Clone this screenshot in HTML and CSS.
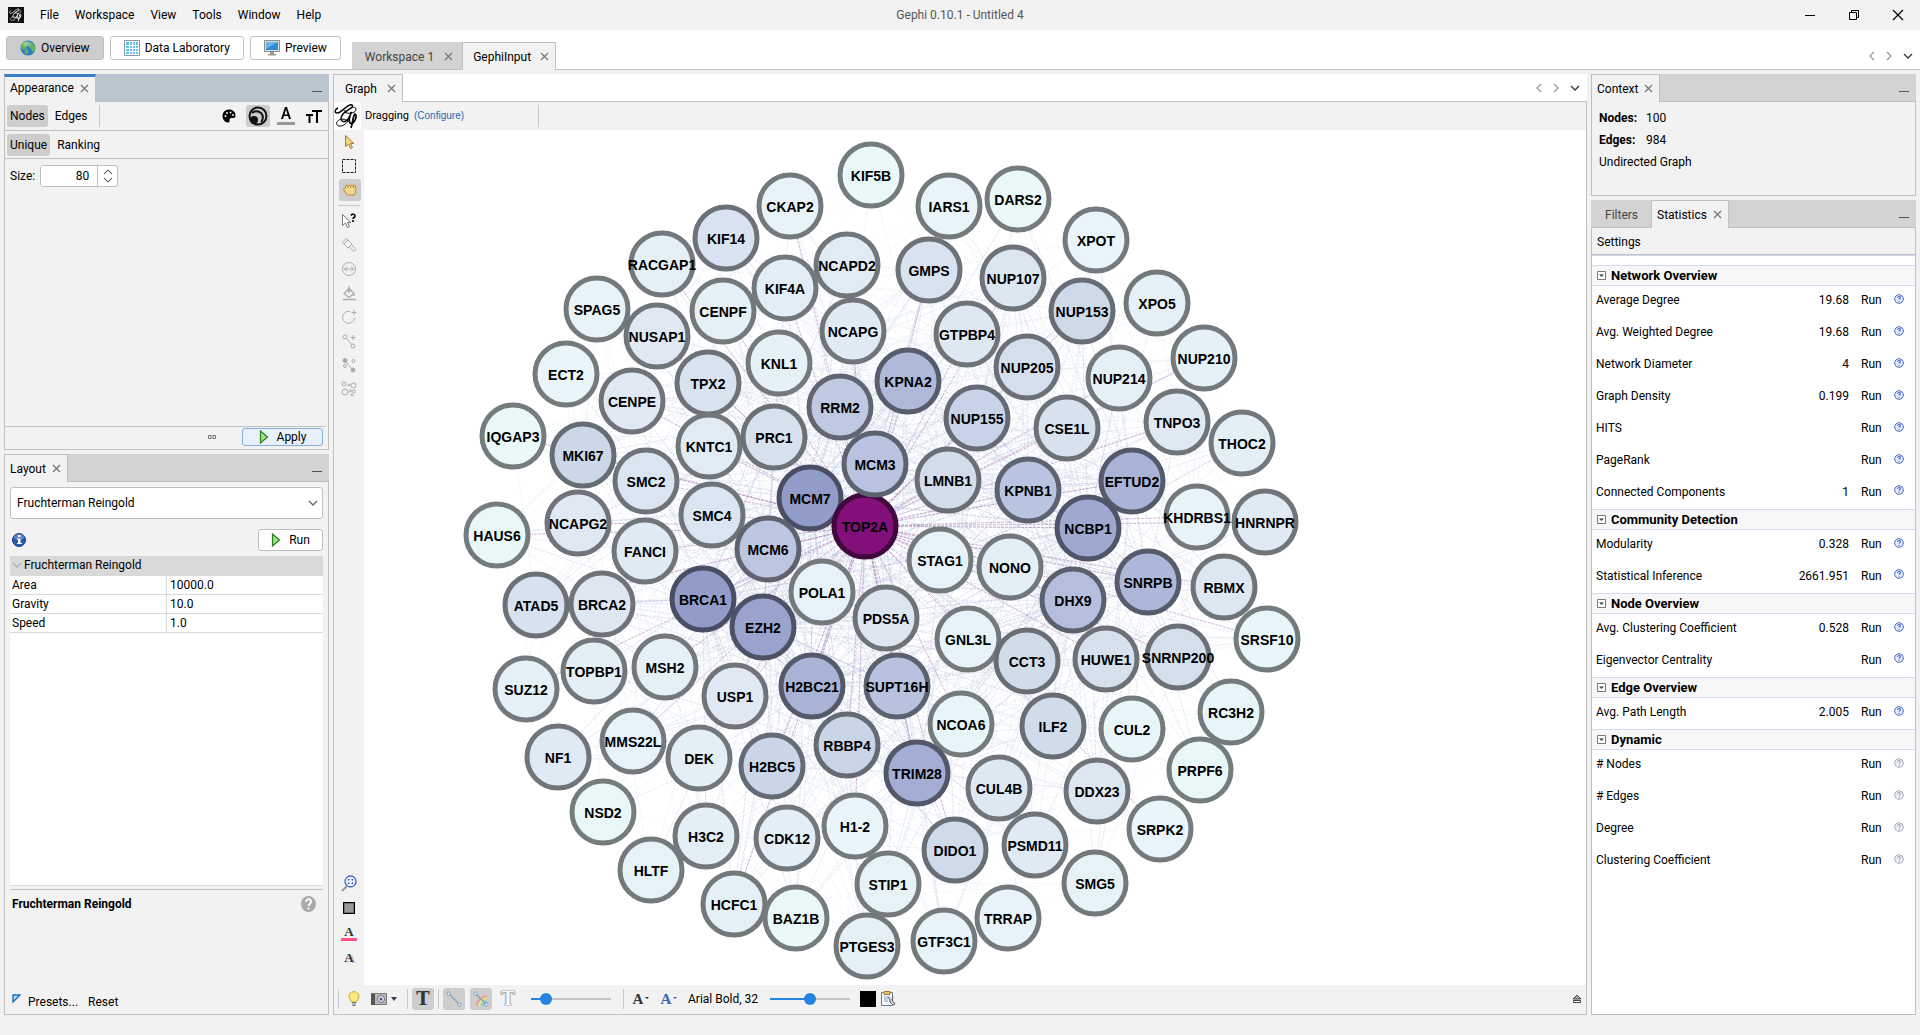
FILE: index.html
```html
<!DOCTYPE html>
<html lang="en">
<head>
<meta charset="utf-8">
<title>Gephi 0.10.1 - Untitled 4</title>
<link rel="stylesheet" href="styles.css">
</head>
<body>
<svg class="sprite" aria-hidden="true">
  <symbol id="x" viewBox="0 0 9 9"><path d="M1 1l7 7M8 1l-7 7" stroke="currentColor" stroke-width="1.3" fill="none"/></symbol>
  <symbol id="left" viewBox="0 0 10 10"><path d="M7 1L3 5l4 4" stroke="currentColor" stroke-width="1.3" fill="none"/></symbol>
  <symbol id="right" viewBox="0 0 10 10"><path d="M3 1l4 4-4 4" stroke="currentColor" stroke-width="1.3" fill="none"/></symbol>
  <symbol id="down" viewBox="0 0 10 10"><path d="M1 3l4 4 4-4" stroke="currentColor" stroke-width="1.3" fill="none"/></symbol>
  <symbol id="play" viewBox="0 0 10 14"><path d="M1.5 1v12L8.500 7z" fill="#a9dc86" stroke="#23801c" stroke-width="1.2"/></symbol>
  <symbol id="fold" viewBox="0 0 9 9"><path d="M.5.5h8v8h-8z" fill="#fff" stroke="#777"/><path d="M2 3.500h5L4.500 6z" fill="#444"/></symbol>
  <symbol id="help" viewBox="0 0 10 10"><circle cx="5" cy="5" r="4.300" fill="#eaf0ff" stroke="currentColor"/><path d="M3.600 3.900c0-2 2.900-1.800 2.800-.2 0 1-1.300 1-1.300 2M5.100 6.700v1" stroke="currentColor" stroke-width="1.1" fill="none"/></symbol>
  <symbol id="edge" viewBox="0 0 16 16"><path d="M3 3l10 10" stroke="#7fa3cc" stroke-width="1.2"/><circle cx="2.500" cy="2.500" r="1.500" fill="#fff" stroke="#6f95c4"/><circle cx="13.500" cy="13.500" r="1.500" fill="#fff" stroke="#6f95c4"/></symbol>
  <symbol id="gephi" viewBox="0 0 26 26"><g fill="none" stroke="currentColor"><path stroke-width="1.400" d="M4 5C1 6 0 10 3 10c5 0 11-10 15-8 3 2-6 5-9 9-5 7 1 10 5 5 2-3 3-6 4-7"/><path stroke-width="1" d="M11 10c4-4 10-8 11-4 1 5-13 6-11 1M17 9c-1 8-6 15-12 14-4-1-3-6 3-7 4 0 6 3 8 2"/><path stroke-width="1.700" d="M16 13c-2 5 0 9 3 7 3-3 4-8 2-9-2 1-2 8-4 14"/></g></symbol>
</svg>

<header class="titlebar">
  <nav class="menu">
    <span class="app-icon"><svg width="14" height="14" viewBox="0 0 26 26"><use href="#gephi"/></svg></span>
    <button>File</button><button>Workspace</button><button>View</button><button>Tools</button><button>Window</button><button>Help</button>
  </nav>
  <h1>Gephi 0.10.1 - Untitled 4</h1>
  <div class="window-buttons">
    <button aria-label="Minimize"><svg width="12" height="12"><path d="M1 6.500h10" stroke="#000"/></svg></button>
    <button aria-label="Restore"><svg width="12" height="12" fill="none" stroke="#000"><path d="M1.500 3.500h7v7h-7zM3.500 3.500v-2h7v7h-2"/></svg></button>
    <button aria-label="Close"><svg width="12" height="12"><path d="M1 1l10 10M11 1L1 11" stroke="#000" stroke-width="1.200"/></svg></button>
  </div>
</header>

<div class="perspectives">
  <button class="perspective active"><svg width="16" height="16"><circle cx="8" cy="8" r="7.500" fill="#2d7fc4"/><path d="M2 4c3-4 7-3 7-1S6 6 6 8s-3 2-5 0zM10 3c3-1 5 3 5 5s-1 4-2 4-1-3-3-4 0-3 0-5zM6 9c3 0 3 3 1 5-2 0-3-3-1-5z" fill="#64b553"/><ellipse cx="7" cy="4" rx="4" ry="2.500" fill="#fff" opacity=".3"/></svg>Overview</button>
  <button class="perspective"><svg width="16" height="16"><path d="M.5.5h15v15H.5z" fill="#fff" stroke="#8b9aa3"/><path d="M2 2h12v12H2z" fill="#62c4ec"/><path d="M2 5.500h12M2 8.500h12M2 11.500h12M5.500 2v12M8.500 2v12M11.500 2v12" stroke="#fff"/></svg>Data Laboratory</button>
  <button class="perspective"><svg width="16" height="16"><path d="M.5.5h15v11H.5z" fill="#ddd" stroke="#8c8c8c"/><path d="M2 2h12v8H2z" fill="#2f8bd2"/><path d="M2 2h12L2 9z" fill="#6bb4ea"/><path d="M6 12h4v2H6zM4 14h8v1.500H4z" fill="#999"/></svg>Preview</button>
  <div class="workspace-tabs">
    <div class="tab muted">Workspace 1<button aria-label="Close Workspace 1"><svg width="9" height="9"><use href="#x"/></svg></button></div>
    <div class="tab active">GephiInput<button aria-label="Close GephiInput"><svg width="9" height="9"><use href="#x"/></svg></button></div>
  </div>
  <div class="tab-nav">
    <button aria-label="Previous"><svg width="10" height="10"><use href="#left"/></svg></button>
    <button aria-label="Next"><svg width="10" height="10"><use href="#right"/></svg></button>
    <button class="dark" aria-label="List"><svg width="10" height="10"><use href="#down"/></svg></button>
  </div>
</div>

<main class="workbench">
  <div class="column left">
    <section class="panel">
      <header class="panel-head focused">
        <div class="tab active">Appearance<button aria-label="Close Appearance"><svg width="9" height="9"><use href="#x"/></svg></button></div>
        <button class="minimize" aria-label="Minimize"></button>
      </header>
      <div class="panel-body">
        <div class="strip">
          <button class="toggle on">Nodes</button><button class="toggle">Edges</button>
          <div class="strip-icons">
            <button class="tool" aria-label="Color"><svg width="14" height="14"><path d="M7 .5C3 .5.500 3.500.500 7S3 13.500 6 13.500c2 0 1.500-1.500 1.500-2.500 0-1.500 1-2 2.500-2 2 0 3.500 0 3.500-2.500C13.500 3 11 .5 7 .5z"/><g fill="#f2f2f2"><circle cx="3.500" cy="7" r="1"/><circle cx="5" cy="4" r="1"/><circle cx="8.500" cy="3.500" r="1"/><circle cx="11" cy="6" r="1"/></g></svg></button>
            <button class="tool on" aria-label="Size"><svg width="20" height="20" fill="none" stroke="#111" stroke-width="2"><circle cx="10" cy="10" r="8.500"/><path d="M4 7a6 6 0 1 1 9 9"/><circle cx="6" cy="14" r="4" fill="#111" stroke="none"/></svg></button>
            <button class="tool" aria-label="Label color"><svg width="18" height="18"><path d="M8 0h2l4 12h-2l-1-3H7l-1 3H4zM9 2.500L7.500 7.500h3z" fill-rule="evenodd"/><path d="M0 15h18v3H0z" fill="#999"/></svg></button>
            <button class="tool" aria-label="Label size"><svg width="16" height="14"><path d="M6 1h10v2h-4v11h-2V3H6zM0 5h7v2H4.500v7h-2V7H0z"/></svg></button>
          </div>
        </div>
        <div class="strip second"><button class="toggle on">Unique</button><button class="toggle">Ranking</button></div>
        <div class="size-row">
          <label for="size">Size:</label>
          <div class="spinner"><input id="size" type="text" value="80"><span class="steps"><svg width="10" height="14" fill="none" stroke="#777" stroke-width="1.200"><path d="M1 5l4-4 4 4M1 9l4 4 4-4"/></svg></span></div>
        </div>
        <div class="apply-row">
          <svg width="10" height="6" fill="none" stroke="#777"><path d="M4.500 1.500h-3v3h3M5.500 1.500h3v3h-3M3 3h4"/></svg>
          <button class="btn apply"><svg width="10" height="14"><use href="#play"/></svg>Apply</button>
        </div>
      </div>
    </section>

    <section class="panel">
      <header class="panel-head">
        <div class="tab active">Layout<button aria-label="Close Layout"><svg width="9" height="9"><use href="#x"/></svg></button></div>
        <button class="minimize" aria-label="Minimize"></button>
      </header>
      <div class="panel-body layout-body">
        <div class="select"><select aria-label="Layout algorithm"><option>Fruchterman Reingold</option></select><svg width="10" height="10"><use href="#down"/></svg></div>
        <div class="run-row">
          <svg width="14" height="14"><circle cx="7" cy="7" r="6.500" fill="#2c58b0" stroke="#1c3f8c"/><ellipse cx="7" cy="4" rx="5" ry="3" fill="#fff" opacity=".25"/><path d="M6 2h2.500v2H6zM5 5.500h3.500v4.500H10v1H5v-1h1V6.500H5z" fill="#fff"/></svg>
          <button class="btn run"><svg width="10" height="14"><use href="#play"/></svg>Run</button>
        </div>
        <div class="sheet">
          <table class="props">
            <thead><tr><th colspan="2"><svg width="10" height="10"><use href="#down"/></svg>Fruchterman Reingold</th></tr></thead>
            <tbody>
              <tr><td>Area</td><td>10000.0</td></tr>
              <tr><td>Gravity</td><td>10.0</td></tr>
              <tr><td>Speed</td><td>1.0</td></tr>
            </tbody>
          </table>
        </div>
        <div class="description"><b>Fruchterman Reingold</b><svg width="15" height="16"><ellipse cx="7.500" cy="8" rx="7.500" ry="8" fill="#aaa"/><path d="M5 6c0-4 5.500-3.500 5 0 0 2-2.500 2-2.500 4M7.500 11.500v2" stroke="#fff" stroke-width="1.800" fill="none"/></svg></div>
        <div class="presets"><svg width="9" height="9"><path d="M1 1h7L1 8z" fill="#bcd9f2" stroke="#1a6fb5" stroke-width="1.400"/></svg><button>Presets...</button><button>Reset</button></div>
      </div>
    </section>
  </div>

  <section class="panel graph">
    <header class="panel-head plain">
      <div class="tab active">Graph<button aria-label="Close Graph"><svg width="9" height="9"><use href="#x"/></svg></button></div>
      <div class="tab-nav">
        <button aria-label="Previous"><svg width="10" height="10"><use href="#left"/></svg></button>
        <button aria-label="Next"><svg width="10" height="10"><use href="#right"/></svg></button>
        <button class="dark" aria-label="List"><svg width="10" height="10"><use href="#down"/></svg></button>
      </div>
    </header>
    <div class="panel-body">
      <div class="mode-bar"><span class="logo"><svg width="26" height="26"><use href="#gephi"/></svg></span><span class="mode">Dragging</span><a href="#configure">(Configure)</a></div>
      <div class="stage">
        <div class="side-tools">
          <button class="tool" aria-label="Select"><svg width="16" height="16"><path d="M4.500 1.500v11l3-2.500 2 4.500 2-1-2-4h3.500z" fill="#f3d58a" stroke="#a87a26"/></svg></button>
          <button class="tool" aria-label="Rectangle selection"><svg width="16" height="16"><path d="M1.500 1.500h13v13h-13z" fill="none" stroke="#222" stroke-dasharray="3 1"/></svg></button>
          <button class="tool on" aria-label="Drag"><svg width="16" height="16"><path d="M2.500 9l-1-2 2-1V4l2-1 1.500 1 1.500-1.500L10 4l2-1 1.500 1 .5 4-1.500 5H5.500z" fill="#f3d78e" stroke="#b98a33"/><path d="M6 4v2M8.500 4v2M11.500 4v2" stroke="#b98a33"/></svg></button>
          <hr>
          <button class="tool" aria-label="Node details"><svg width="16" height="16"><path d="M1.500 1.500v11l3-2.500 2 4.500 2-1-2-4H10z" fill="#fff" stroke="#777"/><path d="M10 2.500c1-2 4-1.500 4 .5 0 1.500-2 1.500-2 3M12 7v2" stroke="#111" stroke-width="1.700" fill="none"/></svg></button>
          <button class="tool dim" aria-label="Brush"><svg width="16" height="16"><path d="M1.500 5.500l4-4L11 7l-4 4zM3 7l4-4M8 9.500l5 5 2-2-4.500-5"/></svg></button>
          <button class="tool dim" aria-label="Sizer"><svg width="16" height="16"><circle cx="8" cy="8" r="6.500"/><path d="M3.500 8h9M6 5.500L3.500 8 6 10.500M10 5.500L12.500 8 10 10.500"/></svg></button>
          <button class="tool dim" aria-label="Painter"><svg width="16" height="16"><path d="M2 14.500h13M3 8.500l5-5 5 5-5 4zM8 8V1M13 9v2" stroke-width="1.300"/></svg></button>
          <button class="tool dim" aria-label="Node pencil"><svg width="16" height="16"><path d="M9 2.500A6 6 0 1 0 13.500 9M13 1v5M10.500 3.500h5"/></svg></button>
          <button class="tool dim" aria-label="Edge pencil"><svg width="16" height="16"><circle cx="4" cy="4" r="2"/><circle cx="12" cy="13" r="2"/><path d="M5.500 5.500l5 6M12 2v5M9.500 4.500h5"/></svg></button>
          <button class="tool dim" aria-label="Shortest path"><svg width="16" height="16"><circle cx="4" cy="3.500" r="2" fill="#aaa"/><circle cx="12" cy="13" r="2" fill="#aaa"/><circle cx="12.500" cy="4" r="1.500"/><circle cx="4" cy="9" r="1.500"/><path d="M5 5l6 7"/></svg></button>
          <button class="tool dim" aria-label="Heat map"><svg width="16" height="16"><circle cx="3" cy="3" r="2"/><circle cx="8" cy="4" r="1"/><circle cx="12.500" cy="4.500" r="2.500"/><circle cx="4" cy="11" r="3"/><circle cx="9.500" cy="10" r="1"/><circle cx="13" cy="10.500" r="1.500"/><circle cx="11" cy="14" r="1"/></svg></button>
          <span class="push"></span>
          <button class="tool" aria-label="Center graph"><svg width="16" height="18"><path d="M6 11l-5 5" stroke="#999" stroke-width="2"/><circle cx="9.500" cy="6.500" r="5.500" fill="#eef3ff" stroke="#4064c8" stroke-width="1.300"/><path d="M7.500 5.500v-1h1M10.500 4.500h1v1M11.500 7.500v1h-1M8.500 8.500h-1v-1" stroke="#2745b0" stroke-width="1.200" fill="none"/></svg></button>
          <button class="tool" aria-label="Background"><svg width="12" height="12"><path d="M.5.500h11v11H.5z" fill="#999" stroke="#000" stroke-width="1.500"/></svg></button>
          <button class="tool serif pink" aria-label="Reset label color">A</button>
          <button class="tool serif shade" aria-label="Reset label size">A</button>
        </div>
        <svg class="canvas" viewBox="364 130 1222 855" role="img" aria-label="Graph"><g id="edges"></g><g id="nodes"></g></svg>
      </div>
      <div class="view-bar">
        <i class="sep"></i>
        <button class="tool" aria-label="Background color"><svg width="12" height="16"><path d="M6 .700c-4 0-6 4-4.500 6.500L3.500 11h5l2-3.800C12 4.700 10 .7 6 .7z" fill="#fbe97c" stroke="#c8a63a"/><path d="M4 11.500h4M4 13h4M4.500 14.500h3" stroke="#777"/></svg></button>
        <button class="tool camera" aria-label="Screenshot"><svg width="16" height="12"><path d="M.5.500h15v11H.5z" fill="#b9b9b9" stroke="#777"/><path d="M0 1h4v11H0z" fill="#555"/><circle cx="10" cy="6" r="3.500" fill="#e8eaf6" stroke="#667"/><circle cx="10" cy="6" r="1.500" fill="#44558f"/></svg><svg width="6" height="4"><path d="M0 0h6L3 4z" fill="#345"/></svg></button>
        <i class="sep"></i>
        <button class="tool on slab" aria-label="Node labels">T</button>
        <i class="sep"></i>
        <button class="tool on" aria-label="Edges"><svg width="16" height="16"><use href="#edge"/></svg></button>
        <button class="tool on" aria-label="Edge color"><svg width="16" height="16" fill="none"><path d="M4 15c0-4 3-9 10-10" stroke="#f09a9a" stroke-width="2"/><path d="M6 15c0-3 3-7 8-8" stroke="#f2e08a" stroke-width="2"/><path d="M8 15c0-2 2-5 6-6" stroke="#9fdc9f" stroke-width="2"/><path d="M10 15c0-2 2-3 4-4" stroke="#9cb4ee" stroke-width="2"/><use href="#edge"/></svg></button>
        <button class="tool slab hollow" aria-label="Edge labels">T</button>
        <input class="range first" type="range" min="0" max="100" value="13" aria-label="Edge weight scale">
        <i class="sep"></i>
        <button class="tool serif size" aria-label="Size mode">A<small></small></button>
        <button class="tool serif size blue" aria-label="Color mode">A<small></small></button>
        <button class="font">Arial Bold, 32</button>
        <input class="range second" type="range" min="0" max="100" value="50" aria-label="Label size">
        <button class="swatch" aria-label="Label color"></button>
        <button class="clip" aria-label="Attributes"><svg width="16" height="17"><path d="M1.500 2.500h11v13h-11z" fill="#f4f8ff" stroke="#667a94"/><path d="M4 1.500h6v3H4z" fill="#e9c06a" stroke="#a87a26"/><path d="M4 7h6M4 9h4M4 11h4" stroke="#8ea6c8"/><path d="M8 7l2 3v2l3 3 2-1-3-4 1-3" fill="#ddd" stroke="#555"/></svg></button>
        <button class="expand" aria-label="Expand"><svg width="10" height="10"><path d="M1 5l4-4 4 4z" fill="#aaa" stroke="#444"/><path d="M1.500 6.500h7v2h-7z" fill="#fff" stroke="#444"/></svg></button>
      </div>
    </div>
  </section>

  <div class="column right">
    <section class="panel">
      <header class="panel-head">
        <div class="tab active">Context<button aria-label="Close Context"><svg width="9" height="9"><use href="#x"/></svg></button></div>
        <button class="minimize" aria-label="Minimize"></button>
      </header>
      <div class="panel-body context">
        <p><b>Nodes:</b>100</p><p><b>Edges:</b>984</p><p>Undirected Graph</p>
      </div>
    </section>
    <section class="panel">
      <header class="panel-head">
        <div class="tab muted">Filters</div>
        <div class="tab active">Statistics<button aria-label="Close Statistics"><svg width="9" height="9"><use href="#x"/></svg></button></div>
        <button class="minimize" aria-label="Minimize"></button>
      </header>
      <div class="panel-body">
        <div class="settings">Settings</div>
        <div class="stats-scroll">
          <table class="stats">
            <tbody>
              <tr><th colspan="4"><svg width="9" height="9"><use href="#fold"/></svg>Network Overview</th></tr>
              <tr><td>Average Degree</td><td>19.68</td><td><button>Run</button></td><td><svg width="10" height="10"><use href="#help"/></svg></td></tr>
              <tr><td>Avg. Weighted Degree</td><td>19.68</td><td><button>Run</button></td><td><svg width="10" height="10"><use href="#help"/></svg></td></tr>
              <tr><td>Network Diameter</td><td>4</td><td><button>Run</button></td><td><svg width="10" height="10"><use href="#help"/></svg></td></tr>
              <tr><td>Graph Density</td><td>0.199</td><td><button>Run</button></td><td><svg width="10" height="10"><use href="#help"/></svg></td></tr>
              <tr><td>HITS</td><td></td><td><button>Run</button></td><td><svg width="10" height="10"><use href="#help"/></svg></td></tr>
              <tr><td>PageRank</td><td></td><td><button>Run</button></td><td><svg width="10" height="10"><use href="#help"/></svg></td></tr>
              <tr><td>Connected Components</td><td>1</td><td><button>Run</button></td><td><svg width="10" height="10"><use href="#help"/></svg></td></tr>
              <tr><th colspan="4"><svg width="9" height="9"><use href="#fold"/></svg>Community Detection</th></tr>
              <tr><td>Modularity</td><td>0.328</td><td><button>Run</button></td><td><svg width="10" height="10"><use href="#help"/></svg></td></tr>
              <tr><td>Statistical Inference</td><td>2661.951</td><td><button>Run</button></td><td><svg width="10" height="10"><use href="#help"/></svg></td></tr>
              <tr><th colspan="4"><svg width="9" height="9"><use href="#fold"/></svg>Node Overview</th></tr>
              <tr><td>Avg. Clustering Coefficient</td><td>0.528</td><td><button>Run</button></td><td><svg width="10" height="10"><use href="#help"/></svg></td></tr>
              <tr><td>Eigenvector Centrality</td><td></td><td><button>Run</button></td><td><svg width="10" height="10"><use href="#help"/></svg></td></tr>
              <tr><th colspan="4"><svg width="9" height="9"><use href="#fold"/></svg>Edge Overview</th></tr>
              <tr><td>Avg. Path Length</td><td>2.005</td><td><button>Run</button></td><td><svg width="10" height="10"><use href="#help"/></svg></td></tr>
              <tr><th colspan="4"><svg width="9" height="9"><use href="#fold"/></svg>Dynamic</th></tr>
            </tbody>
            <tbody class="off">
              <tr><td># Nodes</td><td></td><td><button>Run</button></td><td><svg width="10" height="10"><use href="#help"/></svg></td></tr>
              <tr><td># Edges</td><td></td><td><button>Run</button></td><td><svg width="10" height="10"><use href="#help"/></svg></td></tr>
              <tr><td>Degree</td><td></td><td><button>Run</button></td><td><svg width="10" height="10"><use href="#help"/></svg></td></tr>
              <tr><td>Clustering Coefficient</td><td></td><td><button>Run</button></td><td><svg width="10" height="10"><use href="#help"/></svg></td></tr>
            </tbody>
          </table>
        </div>
      </div>
    </section>
  </div>
</main>
<script src="graph.js"></script>
</body>
</html>
```
FILE: styles.css
```css
* { box-sizing: border-box; }
body {
  margin: 0;
  min-height: 100vh;
  display: flex;
  flex-direction: column;
  background: #f2f2f2;
  color: #000;
  font: 12px/16px Roboto, "Open Sans", sans-serif;
}
button {
  margin: 0;
  padding: 0;
  border: 0;
  background: none;
  color: inherit;
  font: inherit;
  display: inline-flex;
  align-items: center;
}
svg { display: block; flex: none; }
.sprite { display: none; }

/* Title bar */
.titlebar { height: 30px; display: grid; grid-template-columns: 1fr auto 1fr; align-items: center; }
.menu { display: flex; align-items: center; gap: 16px; padding-left: 8px; }
.app-icon { width: 16px; height: 16px; padding: 1px; background: #111; color: #fff; }
.titlebar h1 { margin: 0; font-size: 12px; font-weight: 400; color: #555; }
.window-buttons { display: flex; justify-content: flex-end; gap: 32px; padding-right: 16px; }

/* Perspective bar */
.perspectives {
  height: 40px;
  display: flex;
  align-items: center;
  gap: 6px;
  padding: 0 7px 3px 6px;
  background: #fff;
  border-bottom: 1px solid #c0c0c0;
}
.perspective {
  height: 24px;
  padding: 0 13px;
  gap: 5px;
  border: 1px solid #c0c0c0;
  border-radius: 3px;
  background: #fff;
}
.perspective.active { background: #cdcdcd; }
.workspace-tabs { display: flex; align-self: flex-end; margin: 0 0 -4px 5px; }
.workspace-tabs .tab { padding: 0 6px 0 10px; gap: 9px; }
.workspace-tabs .muted { padding: 0 8px 0 12px; gap: 10px; }
.tab {
  height: 28px;
  display: flex;
  align-items: center;
  gap: 6px;
  padding: 0 6px 0 5px;
  border: 1px solid #c0c0c0;
  border-bottom: 0;
  background: #f2f2f2;
}
.tab button { color: #777; }
.tab.muted { background: #d3d3d3; border-color: #d3d3d3; box-shadow: inset 0 -1px #c0c0c0; color: #444; }
.tab-nav { margin-left: auto; display: flex; align-items: center; gap: 7px; color: #999; }
.tab-nav .dark { color: #333; margin-left: 2px; }
.perspectives .tab-nav { align-self: flex-end; padding-bottom: 5px; }

/* Docked panels */
.workbench { flex: 1; display: grid; grid-template-columns: 325px minmax(0, 1fr) 325px; gap: 4px; padding: 4px 4px 20px; }
.column { display: grid; gap: 4px; }
.left { grid-template-rows: 376px 1fr; }
.right { grid-template-rows: 122px 1fr; }
.panel { display: flex; flex-direction: column; min-height: 0; }
.panel-head { height: 28px; display: flex; background: #d3d3d3; box-shadow: inset 0 -1px #c0c0c0; }
.panel-head.focused { background: #bbc5cf; }
.panel-head.focused .tab { border-top: 3px solid #3a80c4; padding-bottom: 3px; }
.panel-head.plain { background: #fff; }
.panel-head.plain .tab { padding: 0 6px 0 11px; gap: 10px; }
.panel-head.plain .tab-nav { padding-right: 7px; }
.panel-head .muted { width: 60px; padding-left: 13px; }
.minimize { width: 10px; height: 1px; margin: 17px 7px 0 auto; background: #555; }
.panel-body { flex: 1; min-height: 0; display: flex; flex-direction: column; border: 1px solid #c0c0c0; border-top: 0; }

/* Appearance */
.strip { height: 29px; display: flex; align-items: center; padding: 0 2px; border-bottom: 1px solid #c0c0c0; }
.strip.second { height: 28px; }
.toggle { height: 22px; padding: 0 3px; margin-right: 4px; border-radius: 3px; }
.toggle.on, .tool.on { background: #cdcdcd; }
.strip-icons { flex: 1; display: flex; justify-content: flex-end; gap: 4px; margin-left: 4px; border-left: 1px solid #c8c8c8; height: 22px; }
.tool { width: 22px; height: 22px; flex: none; justify-content: center; border-radius: 3px; }
.strip-icons .tool { width: 24px; }
.size-row { display: flex; align-items: center; gap: 5px; padding: 6px 5px 0; }
.spinner { width: 78px; height: 22px; display: flex; border: 1px solid #c0c0c0; border-radius: 3px; background: #fff; overflow: hidden; }
.spinner input { width: 56px; border: 0; padding: 0 8px; font: inherit; text-align: right; }
.steps { flex: 1; display: grid; place-items: center; border-left: 1px solid #c0c0c0; }
.apply-row { margin: auto 3px 2px 0; height: 21px; padding: 0 2px 0 0; display: flex; align-items: center; justify-content: flex-end; gap: 25px; border-top: 1px solid #c0c0c0; }
.btn { justify-content: center; gap: 8px; height: 22px; border: 1px solid #c0c0c0; border-radius: 3px; background: #fff; }
.btn.apply { width: 81px; height: 18px; background: #e8f1fb; border-color: #87afda; }
.btn.run { width: 65px; }

/* Layout */
.layout-body { padding: 5px 5px 0; }
.select { position: relative; }
.select select { display: block; width: 100%; height: 32px; padding: 0 6px; border: 1px solid #c0c0c0; border-radius: 3px; background: #fff; color: #000; font: inherit; appearance: none; }
.select svg { position: absolute; right: 5px; top: 11px; color: #666; }
.run-row { display: flex; justify-content: space-between; align-items: center; padding: 10px 0 5px 2px; }
.sheet { flex: 1; background: #fff; border-bottom: 1px solid #ddd; }
.props { width: 100%; table-layout: fixed; border-collapse: collapse; }
.props th, .props td { height: 19px; padding: 0 2px; text-align: left; font-weight: 400; border-bottom: 1px solid #d9d9d9; }
.props td + td { padding-left: 3px; border-left: 1px solid #d9d9d9; }
.props th { background: #d9d9d9; }
.props th svg { display: inline-block; margin-right: 2px; vertical-align: -1px; color: #aaa; }
.description { margin-top: 3px; height: 101px; padding: 6px 7px 0 2px; display: flex; justify-content: space-between; border-top: 1px solid #c0c0c0; }
.presets { display: flex; gap: 10px; padding: 4px 2px 4px; }
.presets svg { margin-right: -3px; }

/* Graph */
.mode-bar { height: 28px; width: 147px; display: flex; align-items: center; background: #f2f2f2; }
.mode-bar::after { content: ""; order: 9; flex: none; width: 1px; height: 22px; margin-left: 74px; background: #c8c8c8; }
.logo { width: 27px; height: 28px; flex: none; padding-top: 1px; background: #fff; }
.mode { padding: 0 5px 0 4px; font-size: 11px; }
.mode-bar a { color: #2768b8; font: 10px/16px "Liberation Sans", sans-serif; text-decoration: none; }
.stage { flex: 1; min-height: 0; display: flex; }
.side-tools { width: 30px; display: flex; flex-direction: column; align-items: center; gap: 2px; padding: 1px 0 16px; }
.side-tools hr { width: 22px; margin: 2px 0; border: 0; border-top: 1px solid #c8c8c8; }
.dim svg { fill: none; stroke: #aaa; }
.push { flex: 1; }
.serif { font: bold 13px/16px "Liberation Serif", serif; color: #333; }
.pink { width: 16px; height: 16px; margin: 4px 0; border-radius: 0; border-bottom: 3px solid #ff5583; }
.shade { text-shadow: 2px 1px #ccc; }
.canvas { flex: 1; min-width: 0; background: #fff; width: 100%; height: 100%; min-height: 0; }
.canvas text { font: bold 14px "Liberation Sans", Arial, sans-serif; text-anchor: middle; }
.canvas circle { stroke-width: 5px; }
.canvas line { stroke-width: 1px; stroke-dasharray: 3 1; }
.view-bar { height: 29px; display: flex; align-items: center; padding: 0 4px 2px; gap: 4px; }
.sep { width: 1px; height: 20px; background: #c8c8c8; }
.camera { width: 30px; gap: 4px; margin-right: 4px; }
.slab { font: bold 18px/20px "DejaVu Serif", serif; color: #333; }
.tool + .tool.on, .tool.on + .hollow { margin-left: 1px; }
.hollow { color: #fafafa; text-shadow: 0 0 1px #555, 0 0 1px #555, 0 0 1px #555; }
.size { font-size: 15px; margin-left: 2px; }
.size small { width: 0; margin-left: 2px; border: 2px solid transparent; border-top-color: currentColor; }
.blue { color: #3c5fc4; }
.font { margin: 0 2px 0 4px; }
.range { width: 80px; height: 16px; margin: 0 6px; appearance: none; background: linear-gradient(90deg, #2684e0 50%, #c4c4c4 50%) center / 100% 2px no-repeat; }
.range.first { margin: 0 8px; background-image: linear-gradient(90deg, #2684e0 18%, #c4c4c4 18%); }
.range::-webkit-slider-thumb { appearance: none; width: 12px; height: 12px; border-radius: 50%; background: #2684e0; }
.swatch { width: 16px; height: 16px; background: #000; }
.expand { margin-left: auto; }

/* Context and statistics */
.context { padding: 8px 7px; gap: 6px; }
.context p { margin: 0; }
.context b { display: inline-block; min-width: 47px; }
.settings { height: 26px; padding: 6px 5px 0; }
.stats-scroll { flex: 1; padding-top: 10px; background: #fff; border-top: 1px solid #c0c0c0; box-shadow: inset 0 1px #cfdaf2; }
.stats { width: 100%; border-collapse: collapse; }
.stats th { height: 20px; padding: 0 5px; text-align: left; font-size: 13px; background: #f7f7f7; border-top: 1px solid #d2dbf3; border-bottom: 1px solid #d2dbf3; }
.stats th svg { display: inline-block; margin-right: 5px; }
.stats td { height: 32px; padding: 0 4px 3px; }
.stats td:nth-child(2) { padding-right: 5px; text-align: right; }
.stats td:nth-child(3) { width: 34px; padding-left: 7px; }
.stats td:nth-child(4) { width: 27px; padding: 0 6px 6px; color: #4464cc; }
.stats .off td:nth-child(4) { color: #aaa; }
```
FILE: graph.js
```js
// name, x, y, fill
const nodes = `
KIF5B 871 175 eaf8f9|CKAP2 790 206 e8f3f8|KIF14 726 238 d9e2f0|RACGAP1 662 264 e4eff6|SPAG5 597 309 e8f3f8
NUSAP1 657 336 e0e9f3|CENPF 723 311 e5f0f6|KIF4A 785 288 e3edf6|NCAPD2 847 265 e1ebf4|ECT2 566 374 e9f5f9
CENPE 632 401 dfe8f3|TPX2 708 383 d9e3ef|KNL1 779 363 e6f1f7|NCAPG 853 331 e0eaf4|KPNA2 908 381 afb9da
RRM2 840 407 bfc9e2|IQGAP3 513 436 ebf8fa|MKI67 583 455 ccd7e8|KNTC1 709 446 e1ebf4|PRC1 774 437 d6e1ed
SMC2 646 481 dbe5f1|SMC4 712 515 dbe5f1|MCM7 810 498 929cc9|TOP2A 865 526 820f7a|MCM3 875 464 b9c3df
MCM6 768 549 bdc6e0|NCAPG2 578 523 dfe8f3|HAUS6 497 535 eaf7f9|FANCI 645 551 e0eaf4|BRCA1 703 599 929cc9
EZH2 763 627 9aa3cd|POLA1 822 592 e7f2f8|PDS5A 886 618 dce5f0|STAG1 940 560 e7f2f8|GNL3L 968 639 e7f3f8
LMNB1 948 480 d3dceb|IARS1 949 206 e8f4f8|DARS2 1018 199 ebf8fa|XPOT 1096 240 e8f4f9|GMPS 929 270 d9e2ef
NUP107 1013 278 dce6f1|NUP153 1082 311 cfdae9|XPO5 1157 303 e5f0f6|GTPBP4 967 334 dee8f2|NUP205 1027 367 d5deed
NUP214 1119 378 e4eff6|NUP210 1204 358 e6f1f7|NUP155 977 418 c9d3e7|CSE1L 1067 428 d8e2ee|TNPO3 1177 422 dfe9f3
THOC2 1242 443 e4eff5|KPNB1 1028 490 b9c5e0|EFTUD2 1132 481 a9b3d6|KHDRBS1 1197 517 e7f3f7|HNRNPR 1265 522 e0eaf4
NCBP1 1088 528 9fa8d0|NONO 1010 567 e3eef5|DHX9 1073 600 b5bfdd|SNRPB 1148 582 adb7d9|RBMX 1224 587 dde7f1
ATAD5 536 605 d8e1ef|BRCA2 602 604 dde6f1|TOPBP1 594 671 e3eef5|MSH2 665 667 e4eff6|SUZ12 526 689 e6f1f7
USP1 735 696 dfe8f3|H2BC21 812 686 a9b3d6|SUPT16H 897 686 b8c2de|CCT3 1027 661 d1dcea|HUWE1 1106 659 d6e1ed
SNRNP200 1178 657 d4dfeb|SRSF10 1267 639 e8f5f9|RC3H2 1231 712 e8f5f8|NCOA6 961 724 e8f5f8|ILF2 1053 726 d1dceb
CUL2 1132 729 e8f5f9|PRPF6 1200 770 eaf7f8|NF1 558 757 e0eaf5|MMS22L 633 741 e6f2f7|DEK 699 758 e3eef5
H2BC5 772 766 cad6e7|RBBP4 847 745 c9d4e7|TRIM28 917 773 a4add3|CUL4B 999 788 dee8f3|DDX23 1097 791 dde7f2
NSD2 603 812 eaf7f8|H3C2 706 836 e3eef5|CDK12 787 838 e3eef6|H1-2 855 826 e9f5fa|DIDO1 955 850 d0dbea
PSMD11 1035 845 e0eaf4|SRPK2 1160 829 e9f5fa|HLTF 651 870 e7f2f7|HCFC1 734 904 e5f0f6|BAZ1B 796 918 ebf8f9
STIP1 888 884 e7f2f7|SMG5 1095 883 e6f2f6|PTGES3 867 946 e5eff6|GTF3C1 944 941 e7f3f8|TRRAP 1008 918 e7f3f8
`.trim().split(/[|\n]/).map(row => {
  const [name, x, y, hex] = row.split(' ');
  const rgb = [0, 2, 4].map(i => parseInt(hex.slice(i, i + 2), 16));
  return { name, x: +x, y: +y, rgb, weight: name === 'TOP2A' ? 40 : 1 + (235 - rgb[0]) / 9 };
});

const SVG = 'http://www.w3.org/2000/svg';
const css = rgb => `rgb(${rgb.map(Math.round).join(',')})`;
function add(parent, tag, attrs, text) {
  const el = document.createElementNS(SVG, tag);
  for (const key in attrs) el.setAttribute(key, attrs[key]);
  if (text) el.textContent = text;
  parent.appendChild(el);
}

let seed = 11;
const random = () => (seed = seed * 16807 % 2147483647) / 2147483647;

// Well connected (darker) and close nodes attract more links.
const pairs = [];
nodes.forEach((a, i) => nodes.slice(i + 1).forEach(b => {
  const near = Math.exp(-Math.hypot(a.x - b.x, a.y - b.y) / 260);
  pairs.push({ a, b, score: random() / (Math.sqrt(a.weight * b.weight) * near) });
}));
pairs.sort((p, q) => p.score - q.score);

const edges = document.getElementById('edges');
pairs.slice(0, 984).forEach(({ a, b }) => {
  const hub = a.name === 'TOP2A' || b.name === 'TOP2A';
  const mix = a.rgb.map((v, i) => (v + b.rgb[i]) / 2);
  add(edges, 'line', {
    x1: a.x, y1: a.y, x2: b.x, y2: b.y,
    stroke: css(mix), 'stroke-opacity': hub ? 0.6 : 0.5
  });
});

const layer = document.getElementById('nodes');
nodes.forEach(n => add(layer, 'circle', { cx: n.x, cy: n.y, r: 31, fill: css(n.rgb), stroke: css(n.rgb.map(v => v / 2)) }));
nodes.forEach(n => add(layer, 'text', { x: n.x, y: n.y + 6 }, n.name));
```
